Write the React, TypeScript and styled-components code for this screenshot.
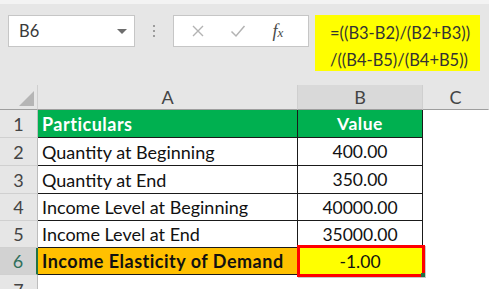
import styled, { createGlobalStyle } from 'styled-components'

const GlobalStyle = createGlobalStyle`
  html, body {
    margin: 0;
    padding: 0;
    background: #ffffff;
    overflow: hidden;
  }
  body {
    font-family: Lato, "Liberation Sans", sans-serif;
  }
`

type Row = {
  label: string
  value: string
  kind?: 'head' | 'result'
}

const rows: Row[] = [
  { label: 'Particulars', value: 'Value', kind: 'head' },
  { label: 'Quantity at Beginning', value: '400.00' },
  { label: 'Quantity at End', value: '350.00' },
  { label: 'Income Level at Beginning', value: '40000.00' },
  { label: 'Income Level at End', value: '35000.00' },
  { label: 'Income Elasticity of Demand', value: '-1.00', kind: 'result' },
]

const App = () => {
  return (
    <Page>
      <GlobalStyle />
      <Bar>
        <NameBox>
          <span>B6</span>
          <Caret />
        </NameBox>
        <Grip>
          <Dot />
          <Dot />
          <Dot />
        </Grip>
        <FxBox>
          <IconSlot>
            <svg width="14" height="14" viewBox="0 0 14 14">
              <path d="M2 2 L12 12 M12 2 L2 12" stroke="#b3b3b3" strokeWidth="1.4" fill="none" />
            </svg>
          </IconSlot>
          <IconSlot>
            <svg width="16" height="14" viewBox="0 0 16 14">
              <path d="M1.5 7.5 L6 12 L14.5 2" stroke="#b3b3b3" strokeWidth="1.5" fill="none" />
            </svg>
          </IconSlot>
          <IconSlot>
            <Fx>
              f<small>x</small>
            </Fx>
          </IconSlot>
        </FxBox>
        <Formula>
          <div>=((B3-B2)/(B2+B3))</div>
          <div>/((B4-B5)/(B4+B5))</div>
        </Formula>
      </Bar>

      <Sheet>
        <Corner>
          <svg width="15" height="15" viewBox="0 0 15 15">
            <polygon points="15,0 15,15 0,15" fill="#b5b5b5" />
          </svg>
        </Corner>
        <ColHead>A</ColHead>
        <ColHead $active>B</ColHead>
        <ColHead $last>C</ColHead>

        {rows.map((row, index) => (
          <RowGroup key={index}>
            <RowHead $active={row.kind === 'result'}>{index + 1}</RowHead>
            <LabelCell $kind={row.kind}>{row.label}</LabelCell>
            <ValueCell $kind={row.kind}>
              {row.value}
              {row.kind === 'result' && (
                <Selection>
                  <Handle />
                </Selection>
              )}
            </ValueCell>
            <Blank />
          </RowGroup>
        ))}

        <RowHead $tail>7</RowHead>
        <Blank />
        <Blank />
        <Blank />
      </Sheet>
    </Page>
  )
}

const Page = styled.div`
  width: 489px;
  height: 289px;
  overflow: hidden;
`

const Bar = styled.div`
  display: flex;
  align-items: flex-start;
  height: 70px;
  padding: 11px 0 0 8px;
  background: #e6e6e6;
  border-top: 4px solid #f3f3f3;
`

const NameBox = styled.div`
  box-sizing: border-box;
  width: 127px;
  height: 32px;
  display: flex;
  align-items: center;
  justify-content: space-between;
  padding: 0 7px 0 10px;
  background: #ffffff;
  border: 1px solid #c6c6c6;
  font-size: 16.5px;
  color: #3a3a3a;
`

const Caret = styled.span`
  width: 0;
  height: 0;
  border-left: 5px solid transparent;
  border-right: 5px solid transparent;
  border-top: 5px solid #6d6d6d;
`

const Grip = styled.div`
  width: 38px;
  height: 32px;
  display: flex;
  flex-direction: column;
  align-items: center;
  justify-content: center;
  gap: 3px;
`

const Dot = styled.span`
  width: 2px;
  height: 2px;
  background: #9c9c9c;
`

const FxBox = styled.div`
  box-sizing: border-box;
  width: 136px;
  height: 32px;
  display: grid;
  grid-template-columns: repeat(3, 40px);
  padding-left: 4px;
  background: #ffffff;
  border: 1px solid #c6c6c6;
`

const IconSlot = styled.div`
  display: flex;
  align-items: center;
  justify-content: center;
`

const Fx = styled.span`
  font-family: "Liberation Serif", serif;
  font-style: italic;
  font-size: 18px;
  color: #4a4a4a;

  small {
    font-size: 13px;
  }
`

const Formula = styled.div`
  box-sizing: border-box;
  width: 165px;
  height: 56px;
  margin-left: 6px;
  padding: 5px 0 0 15px;
  background: #ffff00;
  font-size: 16.5px;
  line-height: 27px;
  color: #333333;
  white-space: nowrap;
`

const Sheet = styled.div`
  display: grid;
  grid-template-columns: 38px 260px 125px 1fr;
  grid-template-rows: 25px 28px 28px 28px 27px 27px 27px 1fr;
  height: 204px;
`

const RowGroup = styled.div`
  display: contents;
`

const Corner = styled.div`
  display: flex;
  align-items: flex-end;
  justify-content: flex-end;
  padding: 0 3px 3px 0;
  background: #e6e6e6;
  border-right: 1px solid #cfcfcf;
  border-bottom: 1px solid #9e9e9e;
`

const ColHead = styled.div<{ $active?: boolean; $last?: boolean }>`
  display: flex;
  align-items: center;
  justify-content: center;
  background: ${(p) => (p.$active ? '#d9d9d9' : '#e6e6e6')};
  border-right: 1px solid ${(p) => (p.$last ? 'transparent' : '#cfcfcf')};
  border-bottom: 1px solid #9e9e9e;
  font-size: 18px;
  color: #444444;
`

const RowHead = styled.div<{ $active?: boolean; $tail?: boolean }>`
  display: flex;
  align-items: ${(p) => (p.$tail ? 'flex-start' : 'center')};
  justify-content: center;
  padding-top: ${(p) => (p.$tail ? '4px' : '0')};
  background: ${(p) => (p.$active ? '#d2d2d2' : '#e6e6e6')};
  border-right: ${(p) => (p.$active ? '2px solid #217346' : '1px solid #bdbdbd')};
  border-bottom: 1px solid #d0d0d0;
  font-size: 18px;
  color: ${(p) => (p.$active ? '#2f6f5b' : '#444444')};
`

const cellFill = (kind?: string, part?: 'label' | 'value') => {
  if (kind === 'head') return '#00b050'
  if (kind === 'result') return part === 'label' ? '#ffc000' : '#ffff00'
  return '#ffffff'
}

const LabelCell = styled.div<{ $kind?: string }>`
  display: flex;
  align-items: center;
  padding-left: 4px;
  background: ${(p) => cellFill(p.$kind, 'label')};
  border-right: 1px solid #1a1a1a;
  border-bottom: 1px solid #1a1a1a;
  font-size: 18px;
  font-weight: ${(p) => (p.$kind ? 700 : 400)};
  letter-spacing: ${(p) => (p.$kind ? '0.5px' : '0')};
  color: ${(p) => (p.$kind === 'head' ? '#ffffff' : '#111111')};
  white-space: nowrap;
`

const ValueCell = styled.div<{ $kind?: string }>`
  position: relative;
  display: flex;
  align-items: center;
  justify-content: center;
  background: ${(p) => cellFill(p.$kind, 'value')};
  border-right: 1px solid #1a1a1a;
  border-bottom: 1px solid #1a1a1a;
  font-size: 17.5px;
  font-weight: ${(p) => (p.$kind === 'head' ? 700 : 400)};
  letter-spacing: ${(p) => (p.$kind === 'head' ? '0.5px' : '0')};
  color: ${(p) => (p.$kind === 'head' ? '#ffffff' : '#111111')};
`

const Selection = styled.div`
  position: absolute;
  top: -3px;
  left: -1px;
  right: -3px;
  bottom: -3px;
  border: 3px solid #ff0000;
  box-shadow: 1px 1px 0 #c8c8c8;
`

const Handle = styled.span`
  position: absolute;
  right: -3px;
  bottom: -3px;
  width: 4px;
  height: 4px;
  background: #217346;
`

const Blank = styled.div`
  background: #ffffff;
`

export default App
